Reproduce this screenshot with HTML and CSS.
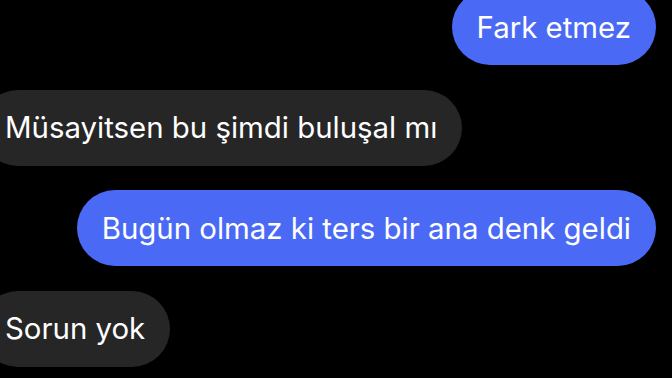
FILE: index.html
```html
<!DOCTYPE html>
<html lang="tr">
<head>
  <meta charset="UTF-8">
  <meta name="viewport" content="width=device-width, initial-scale=1.0">
  <title>Mesajlar</title>
  <link rel="stylesheet" href="styles.css">
</head>
<body>
  <div class="chat">
    <div class="bubble sent">Fark etmez</div>
    <div class="bubble received">Müsayitsen bu şimdi buluşal mı</div>
    <div class="bubble sent">Bugün olmaz ki ters bir ana denk geldi</div>
    <div class="bubble received">Sorun yok</div>
  </div>
</body>
</html>
```

FILE: styles.css
```css
body {
  margin: 0;
  background: #000;
  font-family: Inter, "Noto Sans", sans-serif;
  overflow: hidden;
  height: 100vh;
}
.chat {
  display: flex;
  flex-direction: column;
  gap: 24.5px;
  margin: -11px 16px 0 -20px;
}
.bubble {
  height: 76px;
  padding: 0 25px;
  border-radius: 38px;
  display: flex;
  align-items: center;
  font-size: 29.4px;
  color: #fff;
  white-space: nowrap;
}
.sent {
  align-self: flex-end;
  background: #4a6af5;
}
.received {
  align-self: flex-start;
  background: #262626;
}
```
